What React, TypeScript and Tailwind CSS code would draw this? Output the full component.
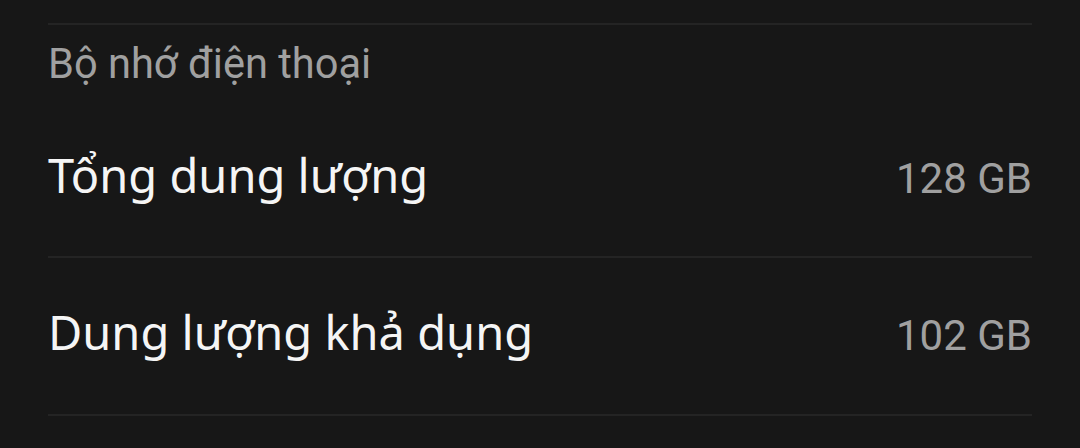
export default function App() {
  return (
    <div className="w-[1080px] h-[448px] bg-[#171717] overflow-hidden" style={{ fontFamily: "Roboto, 'Noto Sans', sans-serif" }}>
      <div className="h-[23px]" />
      <div className="mx-[48px] h-[2px] bg-[#242424]" />
      <div className="h-[77px] px-[48px] flex items-center">
        <span className="text-[41.6px] leading-none text-[#a0a0a0]">Bộ nhớ điện thoại</span>
      </div>
      <div className="h-[154px] px-[48px] flex items-center justify-between">
        <span className="mb-[8px] text-[47px] leading-none text-[#f5f5f5] font-['Noto_Sans',sans-serif]">Tổng dung lượng</span>
        <span className="text-[42px] leading-none text-[#a0a0a0]">128 GB</span>
      </div>
      <div className="mx-[48px] h-[2px] bg-[#242424]" />
      <div className="h-[156px] px-[48px] flex items-center justify-between">
        <span className="mb-[8px] text-[47px] leading-none text-[#f5f5f5] font-['Noto_Sans',sans-serif]">Dung lượng khả dụng</span>
        <span className="text-[42px] leading-none text-[#a0a0a0]">102 GB</span>
      </div>
      <div className="mx-[48px] h-[2px] bg-[#242424]" />
    </div>
  );
}
